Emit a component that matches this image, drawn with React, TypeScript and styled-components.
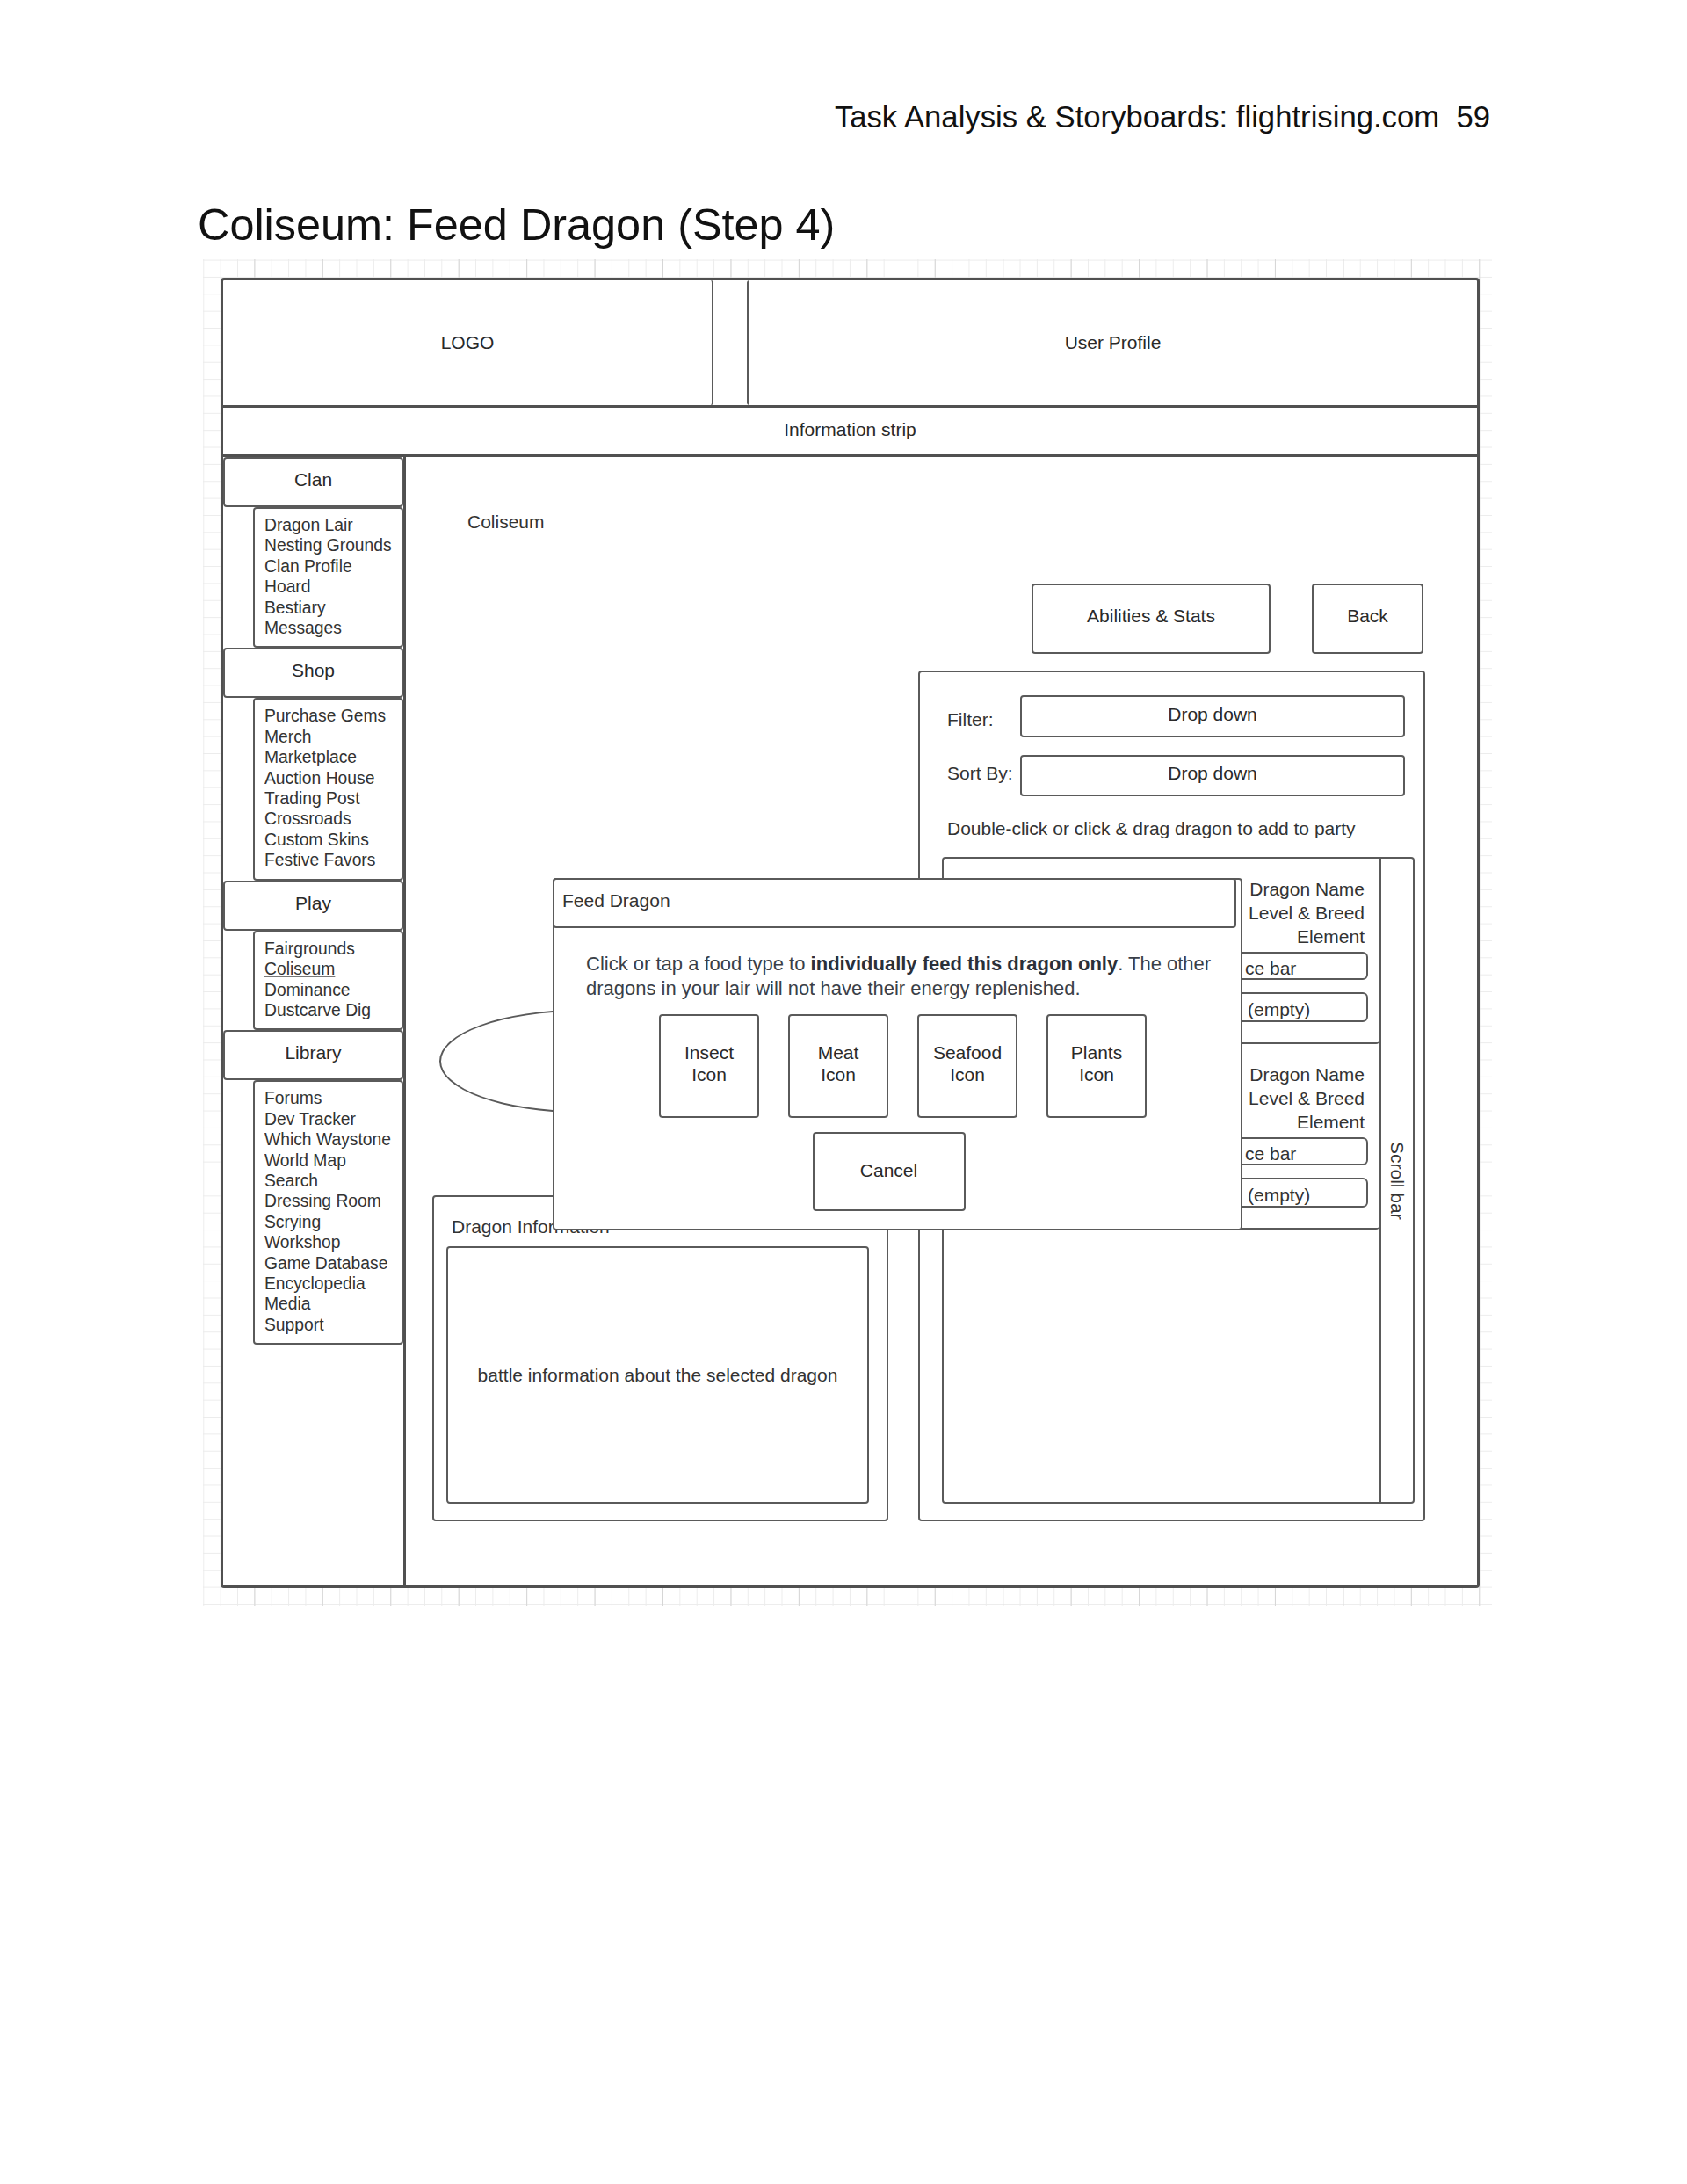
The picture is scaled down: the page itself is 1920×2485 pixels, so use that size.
import React from "react";
import styled, { createGlobalStyle, css } from "styled-components";

const INK = "#5a5a5a";

const GlobalStyle = createGlobalStyle`
  html, body { margin: 0; padding: 0; background: #ffffff; }
  body { font-family: "Liberation Sans", Arial, Helvetica, sans-serif; color: #333; }
  * { box-sizing: border-box; }
`;

const outline = css`
  border: 2px solid ${INK};
  border-radius: 4px;
  background: #fff;
`;

const Page = styled.div`
  width: 1920px;
  min-height: 2485px;
  padding: 113px 0 0 224px;
`;

const Sheet = styled.div`
  width: 1474px;
`;

const RunningHead = styled.div`
  font-size: 34.7px;
  line-height: 40px;
  color: #111;
  text-align: right;
  padding-right: 2px;
  white-space: pre;
`;

const Title = styled.h1`
  margin: 73px 0 0 1px;
  font-weight: normal;
  font-size: 50.4px;
  line-height: 60px;
  color: #111;
`;

const GridPaper = styled.div`
  margin: 9px 0 0 7px;
  width: 1467px;
  height: 1532px;
  padding: 21px 14px 20px 20px;
  background-color: #fff;
  background-image:
    linear-gradient(to right, #d6d6d6 1px, transparent 1px),
    linear-gradient(to right, #ececec 1px, transparent 1px),
    linear-gradient(to bottom, #ececec 1px, transparent 1px);
  background-size: 77.44px 100%, 19.36px 100%, 100% 19.36px;
  background-position: 58.4px 0, 0.3px 0, 0 0.6px;
`;

const Frame = styled.div`
  height: 100%;
  border: 3px solid #505050;
  border-radius: 4px;
  background: #fff;
  display: flex;
  flex-direction: column;
`;

const HeaderRow = styled.div`
  height: 145px;
  border-bottom: 3px solid #505050;
  display: flex;
`;

const HeaderCell = styled.div<{ $width?: number; $side: "left" | "right" }>`
  ${(p) => (p.$width ? `width: ${p.$width}px;` : "flex: 1;")}
  border-${(p) => (p.$side === "left" ? "right" : "left")}: 2px solid ${INK};
  border-radius: 3px;
  display: flex;
  align-items: center;
  justify-content: center;
  font-size: 21px;
  color: #2a2a2a;
`;

const HeaderGap = styled.div`
  width: 38px;
`;

const InfoStrip = styled.div`
  height: 56px;
  border-bottom: 3px solid #505050;
  display: flex;
  align-items: center;
  justify-content: center;
  padding-bottom: 4px;
  font-size: 21px;
  color: #2a2a2a;
`;

const Body = styled.div`
  flex: 1;
  display: flex;
  min-height: 0;
`;

const Sidebar = styled.nav`
  width: 208px;
  border-right: 3px solid #505050;
  display: flex;
  flex-direction: column;
`;

const NavHeader = styled.div`
  ${outline};
  height: 57px;
  display: flex;
  align-items: center;
  justify-content: center;
  padding-bottom: 5px;
  font-size: 21px;
  color: #2a2a2a;
`;

const NavList = styled.ul`
  ${outline};
  margin: 0 0 0 34px;
  padding: 7px 0 9px 11px;
  list-style: none;
  font-size: 19.3px;
  line-height: 23.4px;
  color: #333;
`;

const NavItem = styled.li<{ $current?: boolean }>`
  ${(p) =>
    p.$current &&
    css`
      text-decoration: underline;
      text-decoration-color: #777;
      text-underline-offset: 2px;
    `}
`;

const Main = styled.main`
  flex: 1;
  position: relative;
  display: grid;
  grid-template-columns: 519px 577px;
  column-gap: 34px;
  padding: 0 0 73px 30px;
`;

const LeftColumn = styled.div`
  display: flex;
  flex-direction: column;
`;

const PageLabel = styled.div`
  margin: 62px 0 0 40px;
  font-size: 21px;
  line-height: 24px;
  color: #333;
`;

const Portrait = styled.div`
  margin: auto 0 0 8px;
  width: 320px;
  height: 117px;
  border: 2px solid ${INK};
  border-radius: 50%;
`;

const InfoPanel = styled.section`
  ${outline};
  margin-top: 94px;
  height: 371px;
  padding: 22px 20px 18px 14px;
  display: flex;
  flex-direction: column;
`;

const PanelLabel = styled.div`
  margin-left: 6px;
  font-size: 21px;
  line-height: 24px;
  color: #333;
`;

const InfoBox = styled.div`
  ${outline};
  margin-top: 10px;
  flex: 1;
  display: flex;
  align-items: center;
  justify-content: center;
  font-size: 21px;
  color: #333;
`;

const RightColumn = styled.div`
  padding-top: 144px;
  display: flex;
  flex-direction: column;
`;

const ButtonRow = styled.div`
  height: 80px;
  display: flex;
  justify-content: flex-end;
  gap: 47px;
  padding-right: 2px;
`;

const ActionButton = styled.button<{ $width: number }>`
  ${outline};
  width: ${(p) => p.$width}px;
  height: 100%;
  padding: 0 0 6px;
  font: inherit;
  font-size: 21px;
  color: #2a2a2a;
`;

const PartyPanel = styled.section`
  ${outline};
  margin-top: 19px;
  flex: 1;
  padding: 26px 10px 18px 25px;
  display: flex;
  flex-direction: column;
`;

const FieldRow = styled.div<{ $height: number; $gap?: number }>`
  height: ${(p) => p.$height}px;
  margin: ${(p) => p.$gap ?? 0}px 11px 0 6px;
  display: flex;
  align-items: center;
`;

const FieldLabel = styled.span<{ $nudge: number }>`
  width: 83px;
  position: relative;
  top: ${(p) => p.$nudge}px;
  font-size: 21px;
  color: #333;
`;

const Dropdown = styled.div`
  ${outline};
  flex: 1;
  height: 100%;
  display: flex;
  align-items: center;
  justify-content: center;
  padding-bottom: 5px;
  font-size: 21px;
  color: #2a2a2a;
`;

const Hint = styled.p`
  margin: 25px 0 0 6px;
  font-size: 21px;
  line-height: 24px;
  color: #333;
`;

const DragonList = styled.div`
  ${outline};
  margin-top: 20px;
  flex: 1;
  display: flex;
  overflow: hidden;
`;

const CardStack = styled.div`
  flex: 1;
  display: flex;
  flex-direction: column;
`;

const DragonCard = styled.div`
  border-bottom: 2px solid ${INK};
  border-bottom-right-radius: 4px;
  padding: 21px 13px 23px 0;
  display: flex;
  flex-direction: column;
`;

const DragonMeta = styled.div`
  padding-right: 4px;
  text-align: right;
  font-size: 21px;
  line-height: 27px;
  color: #333;
`;

/* only the part of each bar right of the dialog is visible; its left end sits under the dialog */
const StatBar = styled.div<{ $height: number; $gap: number; $indent: number }>`
  ${outline};
  border-radius: 6px;
  height: ${(p) => p.$height}px;
  margin: ${(p) => p.$gap}px 0 0 328px;
  padding: 5px 0 0 ${(p) => p.$indent}px;
  display: flex;
  align-items: center;
  font-size: 21px;
  color: #333;
  white-space: nowrap;
`;

const ScrollTrack = styled.div`
  width: 38px;
  border-left: 2px solid ${INK};
  writing-mode: vertical-rl;
  display: flex;
  align-items: center;
  justify-content: center;
  font-size: 21px;
  color: #333;
`;

const Dialog = styled.div`
  ${outline};
  position: absolute;
  left: 167px;
  top: 479px;
  width: 785px;
  height: 401px;
  z-index: 5;
  display: flex;
  flex-direction: column;
`;

const DialogTitle = styled.div`
  ${outline};
  width: 778px;
  height: 57px;
  margin: -2px 0 0 -2px;
  padding: 0 0 6px 9px;
  display: flex;
  align-items: center;
  font-size: 21px;
  color: #333;
`;

const DialogText = styled.p`
  margin: 27px 0 0;
  padding: 0 10px 0 36px;
  font-size: 22px;
  line-height: 28px;
  color: #3a3f48;

  strong {
    color: #2b3039;
  }
`;

const FoodRow = styled.div`
  margin-top: 15px;
  padding-left: 12px;
  display: flex;
  justify-content: center;
  gap: 33px;
`;

const FoodButton = styled.button`
  ${outline};
  width: 114px;
  height: 118px;
  padding: 0 0 6px;
  font: inherit;
  font-size: 21px;
  line-height: 25px;
  color: #2a2a2a;
`;

const CancelRow = styled.div`
  margin-top: 16px;
  padding-right: 20px;
  display: flex;
  justify-content: center;
`;

const CancelButton = styled.button`
  ${outline};
  width: 174px;
  height: 90px;
  padding: 0 0 2px;
  font: inherit;
  font-size: 21px;
  color: #2a2a2a;
`;

const navGroups = [
  { title: "Clan", items: ["Dragon Lair", "Nesting Grounds", "Clan Profile", "Hoard", "Bestiary", "Messages"] },
  {
    title: "Shop",
    items: ["Purchase Gems", "Merch", "Marketplace", "Auction House", "Trading Post", "Crossroads", "Custom Skins", "Festive Favors"],
  },
  { title: "Play", items: ["Fairgrounds", "Coliseum", "Dominance", "Dustcarve Dig"] },
  {
    title: "Library",
    items: [
      "Forums",
      "Dev Tracker",
      "Which Waystone",
      "World Map",
      "Search",
      "Dressing Room",
      "Scrying",
      "Workshop",
      "Game Database",
      "Encyclopedia",
      "Media",
      "Support",
    ],
  },
];

const foods = ["Insect", "Meat", "Seafood", "Plants"];

const App = () => {
  return (
    <Page>
      <GlobalStyle />
      <Sheet>
        <RunningHead>{"Task Analysis & Storyboards: flightrising.com  59"}</RunningHead>
        <Title>Coliseum: Feed Dragon (Step 4)</Title>
        <GridPaper>
          <Frame>
            <HeaderRow>
              <HeaderCell $width={558} $side="left">LOGO</HeaderCell>
              <HeaderGap />
              <HeaderCell $side="right">User Profile</HeaderCell>
            </HeaderRow>
            <InfoStrip>Information strip</InfoStrip>
            <Body>
              <Sidebar>
                {navGroups.map((g) => (
                  <React.Fragment key={g.title}>
                    <NavHeader>{g.title}</NavHeader>
                    <NavList>
                      {g.items.map((item) => (
                        <NavItem key={item} $current={item === "Coliseum"}>
                          {item}
                        </NavItem>
                      ))}
                    </NavList>
                  </React.Fragment>
                ))}
              </Sidebar>
              <Main>
                <LeftColumn>
                  <PageLabel>Coliseum</PageLabel>
                  <Portrait />
                  <InfoPanel>
                    <PanelLabel>Dragon Information</PanelLabel>
                    <InfoBox>battle information about the selected dragon</InfoBox>
                  </InfoPanel>
                </LeftColumn>
                <RightColumn>
                  <ButtonRow>
                    <ActionButton $width={272}>Abilities &amp; Stats</ActionButton>
                    <ActionButton $width={127}>Back</ActionButton>
                  </ButtonRow>
                  <PartyPanel>
                    <FieldRow $height={48}>
                      <FieldLabel $nudge={4}>Filter:</FieldLabel>
                      <Dropdown>Drop down</Dropdown>
                    </FieldRow>
                    <FieldRow $height={47} $gap={20}>
                      <FieldLabel $nudge={-3}>Sort By:</FieldLabel>
                      <Dropdown>Drop down</Dropdown>
                    </FieldRow>
                    <Hint>Double-click or click &amp; drag dragon to add to party</Hint>
                    <DragonList>
                      <CardStack>
                        {[0, 1].map((i) => (
                          <DragonCard key={i}>
                            <DragonMeta>
                              Dragon Name
                              <br />
                              Level &amp; Breed
                              <br />
                              Element
                            </DragonMeta>
                            <StatBar $height={32} $gap={4} $indent={13}>
                              ce bar
                            </StatBar>
                            <StatBar $height={34} $gap={14} $indent={16}>
                              (empty)
                            </StatBar>
                          </DragonCard>
                        ))}
                      </CardStack>
                      <ScrollTrack>Scroll bar</ScrollTrack>
                    </DragonList>
                  </PartyPanel>
                </RightColumn>
                <Dialog>
                  <DialogTitle>Feed Dragon</DialogTitle>
                  <DialogText>
                    Click or tap a food type to <strong>individually feed this dragon only</strong>. The other
                    dragons in your lair will not have their energy replenished.
                  </DialogText>
                  <FoodRow>
                    {foods.map((f) => (
                      <FoodButton key={f}>
                        {f}
                        <br />
                        Icon
                      </FoodButton>
                    ))}
                  </FoodRow>
                  <CancelRow>
                    <CancelButton>Cancel</CancelButton>
                  </CancelRow>
                </Dialog>
              </Main>
            </Body>
          </Frame>
        </GridPaper>
      </Sheet>
    </Page>
  );
};

export default App;
